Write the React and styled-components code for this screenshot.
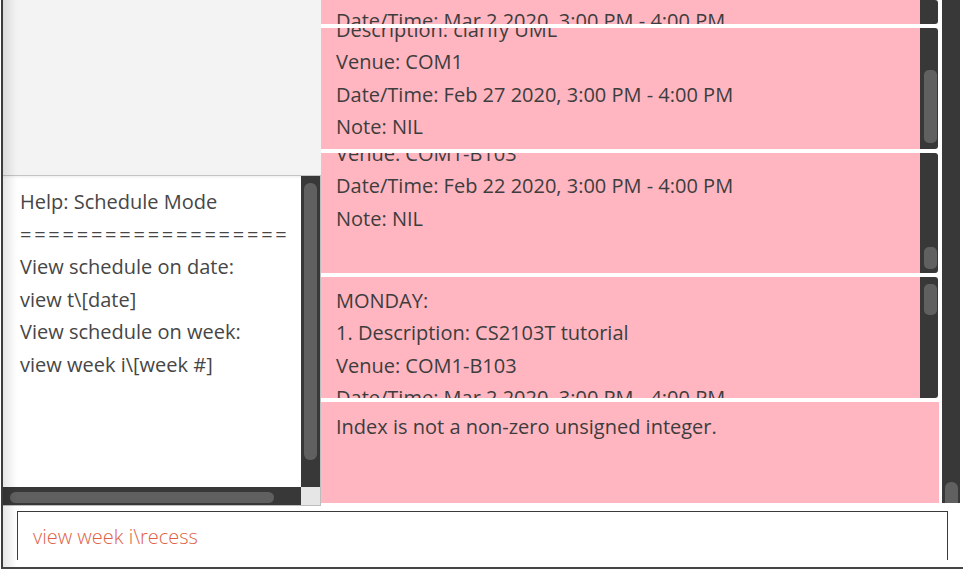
import React from "react";
import styled, { createGlobalStyle } from "styled-components";

const Global = createGlobalStyle`
  html, body { margin: 0; padding: 0; background: #ffffff; }
  body { font-family: "Open Sans", "Noto Sans", sans-serif; }
  * { box-sizing: border-box; }
`;

const Screen = styled.div`
  width: 963px;
  height: 569px;
  overflow: hidden;
  background: #ffffff;
  padding-left: 1px;
`;

const Window = styled.div`
  position: relative;
  height: 569px;
  display: flex;
  flex-direction: column;
  border-left: 2px solid #3d3d3d;
  border-bottom: 2px solid #454545;
  &::before {
    content: "";
    position: absolute;
    left: 0;
    top: 0;
    bottom: 0;
    width: 14px;
    background: linear-gradient(to right, rgba(0, 0, 0, 0.1), rgba(0, 0, 0, 0));
    pointer-events: none;
    z-index: 2;
  }
`;

const Main = styled.div`
  display: flex;
  height: 506px;
  flex: none;
`;

const LeftColumn = styled.div`
  width: 318px;
  flex: none;
  display: flex;
  flex-direction: column;
`;

const TopBlank = styled.div`
  height: 176px;
  flex: none;
  background: #f3f3f3;
  border-bottom: 1px solid #c4c4c4;
`;

const HelpPane = styled.div`
  height: 330px;
  display: grid;
  grid-template-columns: 1fr 19px;
  grid-template-rows: 1fr 18px;
  border-right: 1px solid #bdbdbd;
  border-bottom: 1px solid #bdbdbd;
`;

const HelpBody = styled.div`
  background: #ffffff;
  box-shadow: inset 0 3px 3px -2px rgba(0, 0, 0, 0.08);
  padding: 10px 0 0 17px;
  overflow: hidden;
  color: #464646;
  font-size: 20px;
  line-height: 32.5px;
  white-space: nowrap;
`;

const Line = styled.div`
  letter-spacing: ${(p) => (p.$spread ? p.$spread : 0)}px;
`;

const VTrack = styled.div`
  width: ${(p) => p.$w || 19}px;
  flex: none;
  background: #383838;
  display: flex;
  flex-direction: column;
  padding-left: ${(p) => p.$inset}px;
  border-radius: ${(p) => p.$radius || "0"};
`;

const VThumb = styled.div`
  width: 13px;
  margin-top: ${(p) => p.$top}px;
  height: ${(p) => p.$len}px;
  background: #606060;
  border-radius: ${(p) => p.$radius || "6px"};
  flex: none;
`;

const HTrack = styled.div`
  background: #383838;
  display: flex;
  padding-left: 7px;
  padding-top: 5px;
`;

const HThumb = styled.div`
  width: 264px;
  height: 11px;
  background: #606060;
  border-radius: 6px;
`;

const Corner = styled.div`
  background: #e6e6e6;
`;

const RightPane = styled.div`
  flex: 1;
  display: flex;
  align-items: flex-start;
`;

const ListColumn = styled.div`
  width: 618px;
  flex: none;
  display: flex;
  flex-direction: column;
  gap: 4px;
`;

const Card = styled.div`
  display: flex;
  height: ${(p) => p.$h}px;
  width: 617px;
  flex: none;
`;

const Pink = styled.div`
  flex: 1;
  background: #ffb6c1;
  overflow: hidden;
  padding-left: 15px;
  color: #3d3d3d;
  font-size: 20px;
  line-height: 32.3px;
  white-space: nowrap;
`;

const TextBlock = styled.div`
  margin-top: ${(p) => p.$shift}px;
`;

const ResultBox = styled(Pink)`
  flex: none;
  width: 618px;
  height: 101px;
`;

const OuterTrack = styled.div`
  width: 18px;
  height: 503px;
  margin-left: 3px;
  background: #383838;
  display: flex;
  flex-direction: column;
  padding-left: 3px;
`;

const CommandArea = styled.div`
  flex: 1;
  padding: 5px 0 0 14px;
`;

const CommandBox = styled.div`
  width: 931px;
  height: 49px;
  border: 1px solid #3a3a3a;
  border-bottom: none;
  padding: 9px 0 0 15px;
  color: #df5f45;
  font-size: 20px;
  line-height: 32px;
  font-weight: 300;
`;

const cards = [
  { h: 24, shift: 5, thumb: null, lines: ["Date/Time: Mar 2 2020, 3:00 PM - 4:00 PM"] },
  {
    h: 121,
    shift: -14,
    thumb: { top: 42, len: 73 },
    lines: ["Description: clarify UML", "Venue: COM1", "Date/Time: Feb 27 2020, 3:00 PM - 4:00 PM", "Note: NIL"],
  },
  {
    h: 120,
    shift: -15,
    thumb: { top: 94, len: 22 },
    lines: ["Venue: COM1-B103", "Date/Time: Feb 22 2020, 3:00 PM - 4:00 PM", "Note: NIL"],
  },
  {
    h: 121,
    shift: 8,
    thumb: { top: 7, len: 31 },
    lines: ["MONDAY:", "1. Description: CS2103T tutorial", "Venue: COM1-B103", "Date/Time: Mar 2 2020, 3:00 PM - 4:00 PM"],
  },
];

const helpLines = [
  "Help: Schedule Mode",
  "===================",
  "View schedule on date:",
  "view t\\[date]",
  "View schedule on week:",
  "view week i\\[week #]",
];

export default function App() {
  return (
    <Screen>
      <Global />
      <Window>
        <Main>
          <LeftColumn>
            <TopBlank />
            <HelpPane>
              <HelpBody>
                {helpLines.map((l, i) => (
                  <Line key={i} $spread={l.startsWith("=") ? 2.75 : 0}>
                    {l}
                  </Line>
                ))}
              </HelpBody>
              <VTrack $inset={3}>
                <VThumb $top={7} $len={277} />
              </VTrack>
              <HTrack>
                <HThumb />
              </HTrack>
              <Corner />
            </HelpPane>
          </LeftColumn>
          <RightPane>
            <ListColumn>
              {cards.map((c, i) => (
                <Card key={i} $h={c.h}>
                  <Pink>
                    <TextBlock $shift={c.shift}>
                      {c.lines.map((l, j) => (
                        <div key={j}>{l}</div>
                      ))}
                    </TextBlock>
                  </Pink>
                  <VTrack $w={18} $inset={4} $radius="0 3px 3px 0">
                    {c.thumb && <VThumb $top={c.thumb.top} $len={c.thumb.len} $radius="5px" />}
                  </VTrack>
                </Card>
              ))}
              <ResultBox>
                <TextBlock $shift={9}>Index is not a non-zero unsigned integer.</TextBlock>
              </ResultBox>
            </ListColumn>
            <OuterTrack>
              <VThumb $top={482} $len={21} $radius="6px 6px 0 0" />
            </OuterTrack>
          </RightPane>
        </Main>
        <CommandArea>
          <CommandBox>view week i\recess</CommandBox>
        </CommandArea>
      </Window>
    </Screen>
  );
}
